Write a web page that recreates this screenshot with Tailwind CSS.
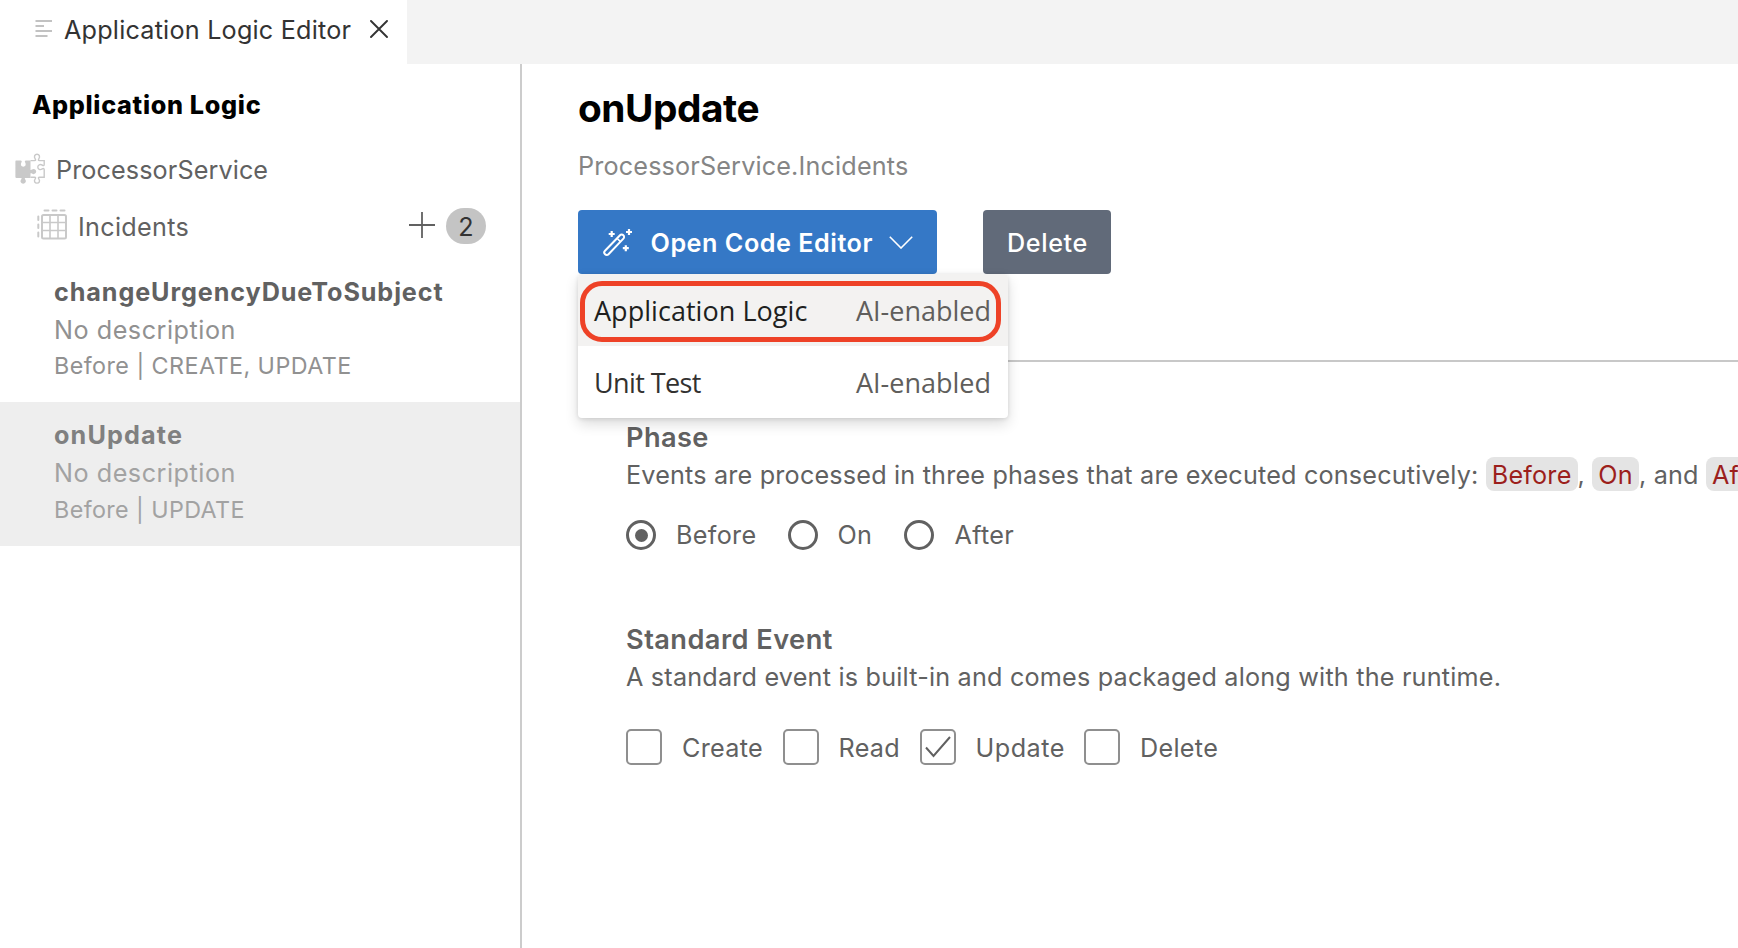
<!DOCTYPE html>
<html lang="en">
<head>
<meta charset="utf-8">
<title>Application Logic Editor</title>
<script src="https://cdn.jsdelivr.net/npm/@tailwindcss/browser@4"></script>
</head>
<body class="flex h-[948px] w-[1738px] flex-col overflow-hidden bg-white font-['Inter',sans-serif] text-[25.2px] leading-9 whitespace-nowrap text-[#616161]">

<!-- Tab strip -->
<header class="flex h-16 shrink-0 bg-[#f3f3f3]">
  <div class="flex h-16 w-[407px] items-start bg-white pl-[35px] text-[#333333]">
    <svg class="mt-[19px] h-[19px] w-[17px] shrink-0" viewBox="0 0 17 19" stroke="#c2c2c2" stroke-width="2"><path d="M0.5 2H17M0.5 7H9M0.5 12H17M0.5 17H12.5"/></svg>
    <span class="ml-[12px] w-[288px] leading-[60px] tracking-[0.21px]">Application Logic Editor</span>
    <svg class="ml-[18px] mt-5 h-[18px] w-[18px] shrink-0" viewBox="0 0 18 18" stroke="#333333" stroke-width="1.9" stroke-linecap="round"><path d="M1 1L17 17M17 1L1 17"/></svg>
  </div>
</header>

<div class="flex min-h-0 flex-1">
  <!-- Sidebar -->
  <aside class="w-[522px] shrink-0 border-r-2 border-[#cccccc]">
    <h2 class="mt-[23px] pl-8 font-extrabold tracking-[0.68px] text-black">Application Logic</h2>

    <div class="mt-[29px] flex items-start pl-[15px]">
      <svg class="mt-px h-[31px] w-[31px] shrink-0" viewBox="0 0 31 31" fill="none">
        <path fill="#c9c9c9" d="M1 7.5H5.6C7 7.5 7 8.6 6.4 9.6C5.3 11.9 6.3 13.8 8.3 13.8S11.3 11.9 10.2 9.6C9.6 8.6 9.6 7.5 11 7.5H15.5V17C16 17.3 16.5 17 17 16.6C18.8 15.2 21.2 16.6 21.2 18.6S18.8 22 17 20.6C16.5 20.2 16 20 15.5 20.3V25H10C9.6 25.6 9.8 26 10.3 26.6C11.7 28.5 10.3 30.8 8.2 30.8S4.7 28.5 6.1 26.6C6.6 26 6.8 25.6 6.4 25H1.5Q0.4 25 0.4 23.9V8.5Q0.4 7.5 1 7.5Z"/>
        <path stroke="#c9c9c9" stroke-width="1.4" d="M15.5 7.6H19.5C20.8 7.6 20.8 6.7 20.2 5.8C18.6 3.5 19.8 1.2 22 1.2S25.4 3.5 23.8 5.8C23.2 6.7 23.2 7.6 24.5 7.6H29.2V11.5C29.2 12.8 28.2 12.8 27.3 12.2C25 10.7 22.8 11.9 22.8 14.1S25 17.4 27.3 15.9C28.2 15.3 29.2 15.4 29.2 16.7V24.2H24.5C23.2 24.2 23.2 25 23.8 25.9C25.4 28.2 24.2 30.1 22 30.1S18.6 28.2 20.2 25.9C20.8 25 20.8 24.2 19.5 24.2H15.5"/>
      </svg>
      <span class="ml-[10px] tracking-[0.1px]">ProcessorService</span>
    </div>

    <div class="mt-[21px] flex items-start pl-[37px]">
      <svg class="h-[31px] w-[30px] shrink-0" viewBox="0 0 30 31" fill="none" stroke="#c9c9c9" stroke-width="2">
        <rect x="5" y="6" width="24" height="23.5" rx="1.5"/>
        <path stroke-width="1.6" d="M13 6V29.5M21 6V29.5M5 13.5H29M5 21.5H29"/>
        <path stroke-linecap="round" d="M7.5 1.5H11.5M15.5 1.5H19.5M23.5 1.5H27.5M1.3 7.5V11M1.3 15.5V19M1.3 23.5V27.5"/>
      </svg>
      <span class="ml-[11px] w-[330.5px] tracking-[0.3px]">Incidents</span>
      <svg class="mt-[3px] h-[26px] w-[26px] shrink-0" viewBox="0 0 26 26" stroke="#616161" stroke-width="1.8"><path d="M0 13H26M13 0V26"/></svg>
      <span class="-mt-px ml-[11.5px] h-9 w-10 rounded-[18px] bg-[#c4c4c4] text-center leading-[38px] text-[#333333]">2</span>
    </div>

    <ul class="mt-[13px]">
      <li class="h-36 pt-4 pl-[54px]">
        <div class="font-bold tracking-[0.9px]">changeUrgencyDueToSubject</div>
        <div class="mt-0.5 tracking-[0.52px] text-[#919191]">No description</div>
        <div class="text-[23.3px] tracking-[0.45px] text-[#919191]">Before | CREATE, UPDATE</div>
      </li>
      <li class="h-36 bg-[#eeeeee] pt-[15px] pl-[54px]">
        <div class="font-bold tracking-[1.15px] text-[#808080]">onUpdate</div>
        <div class="mt-0.5 tracking-[0.52px] text-[#a2a2a2]">No description</div>
        <div class="mt-px text-[23.3px] tracking-[0.4px] text-[#a2a2a2]">Before | UPDATE</div>
      </li>
    </ul>
  </aside>

  <!-- Details -->
  <main class="min-w-0 flex-1 overflow-hidden pl-14">
    <h1 class="mt-5 text-[38.8px] leading-[48px] font-bold tracking-[-0.45px] text-black">onUpdate</h1>
    <p class="mt-4 tracking-[0.16px] text-[#858585]">ProcessorService.Incidents</p>

    <div class="mt-[26px] flex h-16 gap-[46px]">
      <div class="relative">
        <button class="flex h-16 w-[359px] items-center rounded bg-[#3578c6] pl-[25px] font-semibold text-white">
          <svg class="h-[30px] w-[30px] shrink-0" viewBox="0 0 30 30" fill="none" stroke="#ffffff" stroke-width="2">
            <path d="M2 23.8L17 8.3A2.3 2.3 0 0 1 20.4 11.6L5.5 27.2A2.35 2.35 0 0 1 2 23.8Z"/>
            <path stroke-width="1.5" d="M14.2 11.5L17.5 14.6"/>
            <path stroke-width="2.2" d="M8.7 4V10M5.7 7H11.7M26 2V8M23 5H29M22.8 18.2V24.2M19.8 21.2H25.8"/>
          </svg>
          <span class="ml-[17.5px] pt-0.5 tracking-[0.52px]">Open Code Editor</span>
          <svg class="ml-4 h-[13px] w-6 shrink-0" viewBox="0 0 24 13" fill="none" stroke="#ffffff" stroke-width="1.6"><path d="M0.8 0.8L12 12L23.2 0.8"/></svg>
        </button>
        <!-- Dropdown menu -->
        <div class="absolute top-16 left-0 z-10 w-[430px] rounded bg-white font-['Open_Sans',sans-serif] text-[27px] text-[#323130] shadow-[0_6px_14px_rgba(0,0,0,0.14),0_1px_4px_rgba(0,0,0,0.11)]">
          <div class="flex h-[72px] justify-between rounded-t bg-[#f3f2f1] pr-[17px] pl-4 leading-[73px] text-[#201f1e]">
            <span class="tracking-[0.04px]">Application Logic</span><span class="text-[#605e5c]">AI-enabled</span>
          </div>
          <div class="flex h-[72px] justify-between pr-[17px] pl-4 leading-[73px]">
            <span class="tracking-[-0.6px]">Unit Test</span><span class="text-[#605e5c]">AI-enabled</span>
          </div>
          <div class="absolute top-[7px] left-0.5 h-[61px] w-[421px] rounded-[22px] border-5 border-[#ee4227]"></div>
        </div>
      </div>
      <button class="flex h-16 w-32 items-center justify-center rounded bg-[#616a79] pt-0.5 pl-px font-medium tracking-[0.6px] text-white">Delete</button>
    </div>

    <hr class="mt-[86px] border-t-2 border-[#c8c8c8]">

    <section class="mt-[58px] pl-12">
      <h3 class="text-[27.2px] font-semibold tracking-[0.4px]">Phase</h3>
      <p class="mt-px tracking-[0.185px]">Events are processed in three phases that are executed consecutively: <code class="rounded-lg bg-[#e4e4e4] px-[6px] pt-[3px] pb-px font-['Inter',sans-serif] tracking-[0.2px] text-[#9c1f1c]">Before</code>, <code class="rounded-lg bg-[#e4e4e4] px-[6px] pt-[3px] pb-px font-['Inter',sans-serif] tracking-[0.3px] text-[#9c1f1c]">On</code>, and <code class="rounded-lg bg-[#e4e4e4] px-[6px] pt-[3px] pb-px font-['Inter',sans-serif] text-[#9c1f1c]">After</code></p>
      <div class="mt-6 flex items-center tracking-[0.3px]">
        <label class="flex w-[162px] items-center"><span class="flex h-[30px] w-[30px] items-center justify-center rounded-full border-3 border-[#616161]"><span class="h-[13px] w-[13px] rounded-full bg-[#616161]"></span></span><span class="ml-5">Before</span></label>
        <label class="flex w-[116px] items-center"><span class="h-[30px] w-[30px] rounded-full border-3 border-[#616161]"></span><span class="ml-[19.5px]">On</span></label>
        <label class="flex items-center"><span class="h-[30px] w-[30px] rounded-full border-3 border-[#616161]"></span><span class="ml-[20.5px]">After</span></label>
      </div>
    </section>

    <section class="mt-[69px] pl-12">
      <h3 class="text-[27.2px] font-semibold tracking-[0.45px]">Standard Event</h3>
      <p class="mt-px tracking-[0.2px]">A standard event is built-in and comes packaged along with the runtime.</p>
      <div class="mt-[34px] flex items-center tracking-[0.3px]">
        <label class="flex h-9 w-[157px] items-center"><span class="h-9 w-9 rounded-[5px] border-2 border-[#8f8f8f]"></span><span class="ml-5 pt-0.5">Create</span></label>
        <label class="flex h-9 w-[137px] items-center"><span class="h-9 w-9 rounded-[5px] border-2 border-[#8f8f8f]"></span><span class="ml-[19.5px] pt-0.5">Read</span></label>
        <label class="flex h-9 w-[164px] items-center"><span class="flex h-9 w-9 items-center justify-center rounded-[5px] border-2 border-[#8f8f8f]"><svg class="h-[22px] w-[26px]" viewBox="0 0 26 22" fill="none" stroke="#616161" stroke-width="2"><path d="M1 11.5L8.5 20L25 1"/></svg></span><span class="ml-[19.5px] pt-0.5 tracking-[0.5px]">Update</span></label>
        <label class="flex h-9 items-center"><span class="h-9 w-9 rounded-[5px] border-2 border-[#8f8f8f]"></span><span class="ml-5 pt-0.5">Delete</span></label>
      </div>
    </section>
  </main>
</div>
</body>
</html>
